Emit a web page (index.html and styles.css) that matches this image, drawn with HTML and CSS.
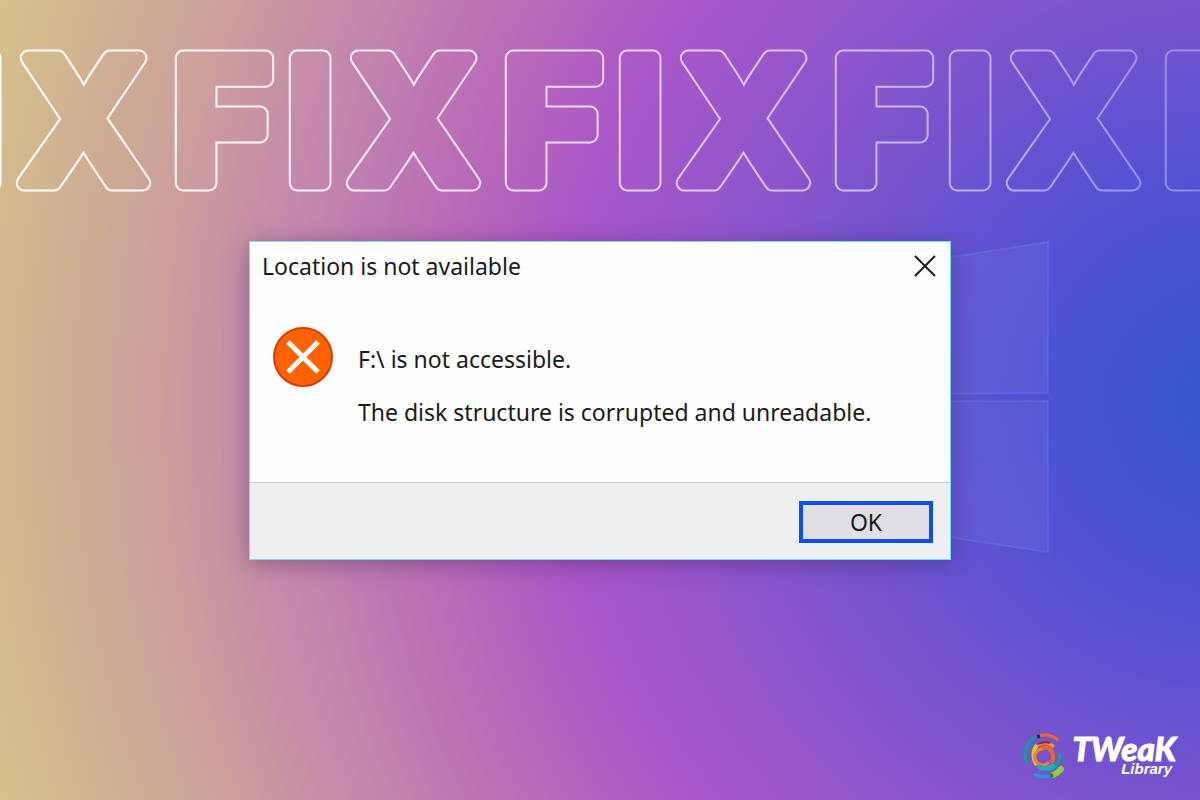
FILE: index.html
```html
<!DOCTYPE html>
<html lang="en">
<head>
  <meta charset="UTF-8" />
  <meta name="viewport" content="width=device-width, initial-scale=1" />
  <title>Location is not available</title>
  <link rel="stylesheet" href="styles.css">
</head>
<body>

  <!-- faint window panes behind the dialog -->
  <svg class="panes" viewBox="0 0 400 320" aria-hidden="true">
    <path d="M100 50 L396 4 V155 L100 157 Z" />
    <path d="M100 163 L396 163 V314 L100 270 Z" />
  </svg>

  <svg class="banner" aria-hidden="true">
    <defs>
      <linearGradient id="fade" gradientUnits="userSpaceOnUse" x1="0" y1="0" x2="1200" y2="0">
        <stop offset="0" stop-color="#fff" />
        <stop offset="0.4" stop-color="#fff" stop-opacity="0.8" />
        <stop offset="0.85" stop-color="#fff" stop-opacity="0.5" />
        <stop offset="1" stop-color="#fff" stop-opacity="0.3" />
      </linearGradient>
      <!-- fades to the right and knocks out the inside, so only the rim is left -->
      <mask id="rim" maskUnits="userSpaceOnUse" x="0" y="0" width="1200" height="143">
        <rect width="1200" height="143" fill="url(#fade)" />
        <use href="#words" class="inside" />
      </mask>
    </defs>
    <g class="letters" mask="url(#rim)">
      <g id="words">
        <text x="-44 20" y="134">IX</text>
        <text x="172 286 350" y="134">FIX</text>
        <text x="502 616 680" y="134">FIX</text>
        <text x="832 946 1010" y="134">FIX</text>
        <text x="1162" y="134">F</text>
      </g>
    </g>
  </svg>

  <main class="dialog" role="alertdialog" aria-labelledby="title" aria-describedby="message">
    <header class="titlebar">
      <h1 id="title">Location is not available</h1>
      <button class="close" aria-label="Close">
        <svg width="22" height="22" viewBox="0 0 22 22"><path d="M1 1 L21 21 M21 1 L1 21" /></svg>
      </button>
    </header>

    <div class="content">
      <svg class="error" width="62" height="62" viewBox="0 0 62 62" aria-hidden="true">
        <circle cx="31" cy="31" r="29" />
        <path d="M16 16 L46 46 M46 16 L16 46" />
      </svg>
      <div id="message">
        <p>F:\ is not accessible.</p>
        <p>The disk structure is corrupted and unreadable.</p>
      </div>
    </div>

    <footer class="actions">
      <button class="ok">OK</button>
    </footer>
  </main>

  <div class="brand">
    <svg width="50" height="52" viewBox="0 0 50 52" aria-hidden="true">
      <g fill="none" stroke-width="3">
        <path stroke="#0f9f9c" d="M17 6 A22 22 0 0 0 7 34" />
        <path stroke="#f7661c" d="M19 6 Q29 3 38 10" />
        <path stroke="#222" d="M17 7 L20 6" />
        <path stroke="#b9d91e" stroke-width="4" d="M17 15 A16 16 0 0 0 17 35" />
        <path stroke="#f59a1f" d="M18 15 Q27 10 34 17" />
        <path stroke="#a8202a" stroke-width="2" d="M18 14 Q24 11 30 13" />
        <path stroke="#f7661c" stroke-width="4" d="M21 19 Q28 15 32 22 Q35 29 31 32" />
        <path stroke="#f58220" d="M22 19 A8 8 0 1 0 29 32" />
        <path stroke="#0f9f9c" d="M40 24 Q40 32 35 37" />
        <path stroke="#12b2b6" stroke-width="5" d="M18 36 Q26 42 35 35" />
        <path stroke="#1c9be6" stroke-width="3" d="M14 44 Q21 48 30 46" />
        <path stroke="#8fd02e" stroke-width="6" stroke-linecap="round" d="M33 45 Q38 43 41 39" />
        <path stroke="#0a7f4c" stroke-width="4" d="M30 46 L33 45" />
      </g>
    </svg>
    <div class="name">
      <span class="tweak">TWeaK</span>
      <span class="library">Library</span>
    </div>
  </div>

</body>
</html>
```
FILE: styles.css
```css
* {
  box-sizing: border-box;
}

body {
  margin: 0;
  min-height: 100vh;
  overflow: hidden;
  position: relative;
  display: flex;
  flex-direction: column;
  align-items: center;
  font-family: "Noto Sans", "Open Sans", sans-serif;
  color: #1a1a1a;
  background: radial-gradient(circle at 102% 50%, #3355d0 0, #4553d0 130px, #5452d2 220px, #6653d2 320px, #7a53cd 410px, #9556cc 540px, #a957c8 670px, #b868b8 780px, #c487ac 940px, #cc9f9c 1070px, #d1b391 1190px, #d5c28b 1290px);
}

.panes {
  position: absolute;
  left: calc(50% + 52px);
  top: 238px;
  width: 400px;
  height: 320px;
}

.panes path {
  fill: rgba(125, 125, 225, 0.2);
  stroke: rgba(110, 150, 230, 0.25);
  stroke-width: 2;
}

.banner {
  width: 100%;
  height: 143px;
  margin-top: 49px;
}

.letters {
  font-family: Inter, sans-serif;
  font-size: 172px;
  font-weight: 700;
  fill: #fff;
  stroke: #fff;
  stroke-width: 17px;
  stroke-linejoin: round;
}

.inside {
  font-family: Inter, sans-serif;
  font-size: 172px;
  font-weight: 700;
  fill: #000;
  stroke: #000;
  stroke-width: 13px;
  stroke-linejoin: round;
}

.dialog {
  position: relative;
  width: 702px;
  max-width: 100%;
  margin-top: 49px;
  background: #fefefe;
  border: 1px solid #6fe3f5;
  box-shadow: 0 4px 22px rgba(50, 30, 80, 0.4);
}

.titlebar {
  display: flex;
  justify-content: space-between;
  align-items: center;
  height: 48px;
  padding: 0 12px;
}

h1 {
  margin: 0;
  font-size: 23px;
  font-weight: 400;
}

.close {
  display: flex;
  padding: 2px;
  border: 0;
  background: none;
}

.close path {
  stroke: #1a1a1a;
  stroke-width: 2;
}

.content {
  display: flex;
  gap: 24px;
  height: 192px;
  padding: 36px 22px 0;
}

.error circle {
  fill: #ff6200;
  stroke: #d83b01;
  stroke-width: 2;
}

.error path {
  stroke: #fff;
  stroke-width: 5;
}

#message {
  padding-top: 17px;
}

p {
  margin: 0 0 20px;
  font-size: 23px;
  line-height: 33px;
}

.actions {
  display: flex;
  justify-content: flex-end;
  padding: 18px 17px 16px;
  background: #efefef;
  border-top: 1px solid #cfcfcf;
}

.ok {
  width: 134px;
  height: 42px;
  padding: 0;
  border: 4px solid #0a50ee;
  background: #e0e0e4;
  color: #1a1a1a;
  font: 23px "Noto Sans", "Open Sans", sans-serif;
}

.brand {
  position: absolute;
  right: 24px;
  bottom: 18px;
  display: flex;
  gap: 2px;
  color: #fff;
}

.name {
  display: flex;
  flex-direction: column;
  align-items: flex-end;
  padding-top: 4px;
}

.tweak {
  font: italic 900 33px/28px Lato, sans-serif;
  -webkit-text-stroke: 1px #fff;
}

.library {
  padding-right: 4px;
  font: italic 700 15px/14px "Liberation Sans", sans-serif;
}
```
